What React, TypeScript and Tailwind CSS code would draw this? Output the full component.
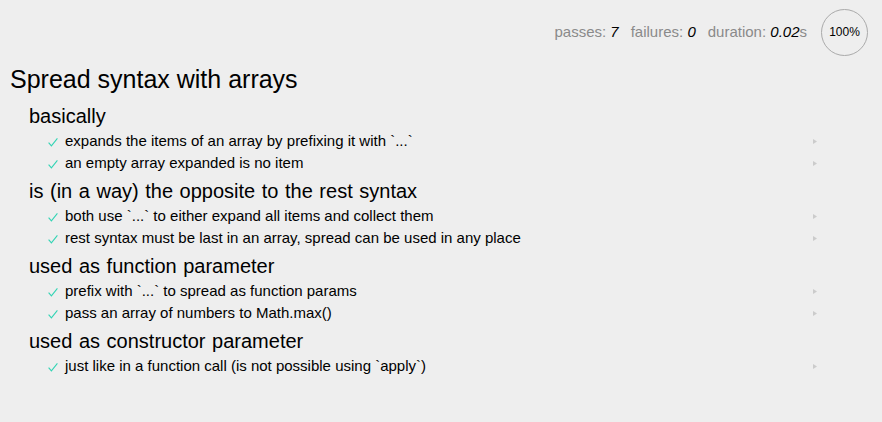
const suites = [
  {
    title: "basically",
    tests: [
      "expands the items of an array by prefixing it with `...`",
      "an empty array expanded is no item",
    ],
  },
  {
    title: "is (in a way) the opposite to the rest syntax",
    tests: [
      "both use `...` to either expand all items and collect them",
      "rest syntax must be last in an array, spread can be used in any place",
    ],
  },
  {
    title: "used as function parameter",
    tests: [
      "prefix with `...` to spread as function params",
      "pass an array of numbers to Math.max()",
    ],
  },
  {
    title: "used as constructor parameter",
    tests: ["just like in a function call (is not possible using `apply`)"],
  },
];

function Stat({ label, value, unit }: { label: string; value: string; unit?: string }) {
  return (
    <li className="text-[#8a8a8a]">
      {label}: <em className="text-black">{value}</em>
      {unit}
    </li>
  );
}

function TestRow({ title }: { title: string }) {
  return (
    <li className="flex h-[22px] items-center justify-between pl-[19px] pr-[65px]">
      <h2 className="flex items-center text-[15px]">
        <span className="flex w-[17px] items-center">
          <svg width="10" height="9" viewBox="0 0 10 9" className="mt-[2px]">
            <path d="M0.6 4.6 L3.4 7.8 L9.4 0.4" fill="none" stroke="#33d4b4" strokeWidth="1.1" />
          </svg>
        </span>
        {title}
      </h2>
      <svg width="4" height="5" viewBox="0 0 4 5" className="opacity-40">
        <polygon points="0,0 4,2.5 0,5" fill="#999" />
      </svg>
    </li>
  );
}

export default function App() {
  return (
    <div className="min-h-[422px] bg-[#eeeeee] font-['Liberation_Sans',Arial,sans-serif] text-black">
      <ul className="flex h-16 items-center justify-end gap-[12px] pr-[14px] text-[15px]">
        <Stat label="passes" value="7" />
        <Stat label="failures" value="0" />
        <Stat label="duration" value="0.02" unit="s" />
        <li className="ml-[2px] flex h-[47px] w-[47px] items-center justify-center rounded-full border border-[#aaa] text-[12px]">
          100%
        </li>
      </ul>

      <section className="pl-[10px]">
        <h1 className="flex h-8 items-center text-[25px]">Spread syntax with arrays</h1>
        <ul className="mt-[6px] pl-[19px]">
          {suites.map((suite, i) => (
            <li key={suite.title} className={i > 0 ? "mt-[3px]" : ""}>
              <h1 className="flex h-7 items-center text-[20px] [word-spacing:1px]">{suite.title}</h1>
              <ul>
                {suite.tests.map((t) => (
                  <TestRow key={t} title={t} />
                ))}
              </ul>
            </li>
          ))}
        </ul>
      </section>
    </div>
  );
}
